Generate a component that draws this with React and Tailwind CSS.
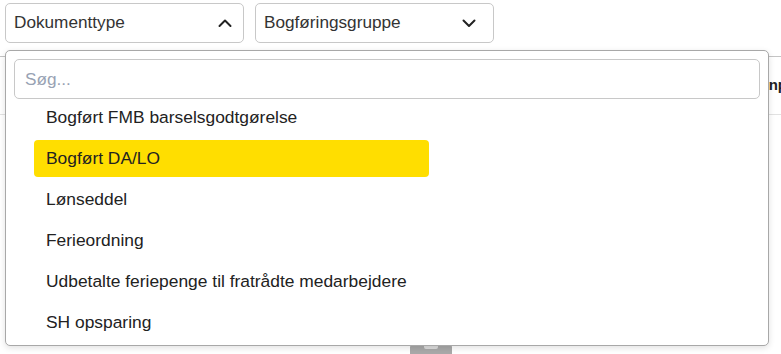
import { useState } from 'react';

const options = [
  'Bogført FMB barselsgodtgørelse',
  'Bogført DA/LO',
  'Lønseddel',
  'Ferieordning',
  'Udbetalte feriepenge til fratrådte medarbejdere',
  'SH opsparing',
];

function Chevron({ up }) {
  return (
    <svg width="16" height="16" viewBox="0 0 16 16" fill="none" stroke="#222" strokeWidth="2" strokeLinecap="round" strokeLinejoin="round">
      {up ? <path d="M2.5 11 L8 5.5 L13.5 11" /> : <path d="M2.5 5.5 L8 11 L13.5 5.5" />}
    </svg>
  );
}

export default function App() {
  const [active, setActive] = useState(1);

  return (
    <div className="relative w-[781px] h-[354px] overflow-hidden bg-white font-['Liberation_Sans',Arial,sans-serif] text-[#222]">
      {/* Filters */}
      <div className="flex gap-[11px] pl-[5px] pt-[3px]">
        <button className="flex h-[40px] w-[239px] items-center justify-between rounded-[5px] border border-[#c8c8c8] pl-[8px] pr-[10px] text-[17.2px] text-[#333]">
          <span>Dokumenttype</span>
          <Chevron up />
        </button>
        <button className="flex h-[40px] w-[239px] items-center justify-between rounded-[5px] border border-[#c8c8c8] pl-[8px] pr-[16px] text-[17.2px] text-[#333]">
          <span>Bogføringsgruppe</span>
          <Chevron />
        </button>
      </div>

      {/* Table header behind */}
      <div className="mt-[13px] flex h-[59px] items-center justify-end border-t border-b border-t-[#c4c4c4] border-b-[#e2e2e2]">
        <span className="mr-[-51px] text-[15px] font-bold text-[#222]">Lønperiode</span>
      </div>

      <div className="absolute left-[410px] top-[345px] h-[12px] w-[42px] rounded-[2px] bg-[#a9a9a9]">
        <div className="mx-auto mt-[1px] h-[3px] w-[14px] rounded-b-[2px] bg-[#dcdcdc]" />
      </div>

      {/* Dropdown */}
      <div className="absolute left-[5px] top-[50px] h-[296px] w-[764px] rounded-[5px] border border-[#a8a8a8] bg-white shadow-[0_2px_6px_rgba(0,0,0,0.12)]">
        <div className="px-[8px] pt-[8px]">
          <input
            placeholder="Søg..."
            className="h-[40px] w-[746px] rounded-[5px] border border-[#c8c8c8] px-[10px] text-[17.2px] outline-none placeholder:text-[#98a2b3]"
          />
        </div>
        <ul className="pl-[28px]">
          {options.map((o, i) => (
            <li
              key={o}
              onMouseEnter={() => setActive(i)}
              className={`mb-[4px] flex h-[37px] w-[395px] items-center whitespace-nowrap rounded-[4px] pl-[12px] text-[17.4px] ${
                i === active ? 'bg-[#ffde00]' : ''
              }`}
            >
              {o}
            </li>
          ))}
        </ul>
      </div>
    </div>
  );
}
